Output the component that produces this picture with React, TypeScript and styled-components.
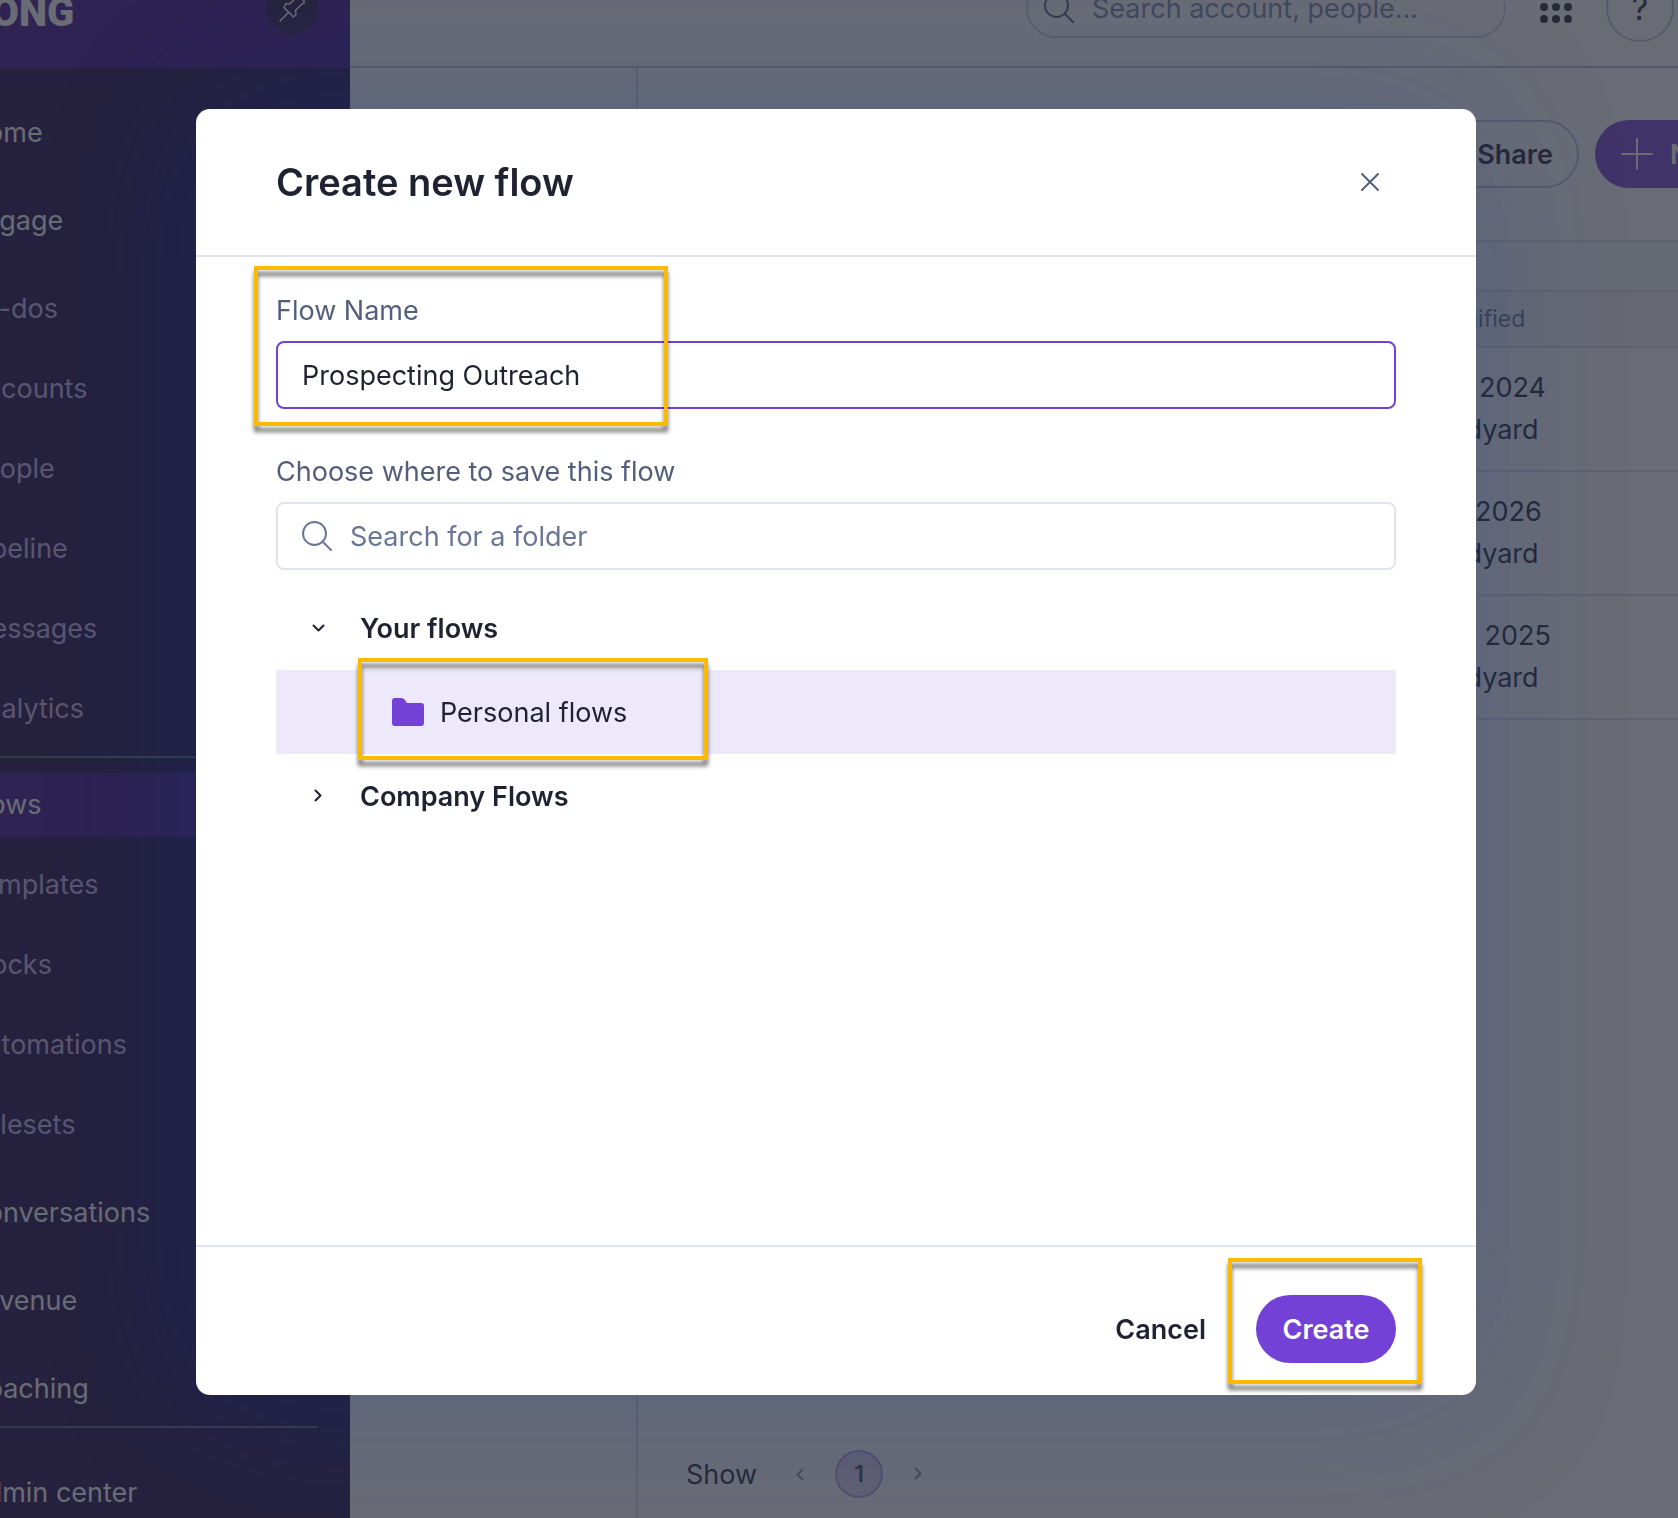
import React, { useState } from "react";
import styled, { createGlobalStyle, css } from "styled-components";

const color = {
  ink: "#1f2230",
  slate: "#545e7a",
  placeholder: "#6b7694",
  line: "#e1e4ec",
  violet: "#7341d6",
  violetSoft: "#eee9fa",
  navy: "#1c0549",
  navyBand: "#390c8a",
  navMuted: "#cdb4ea",
  marker: "#fbb900",
};

const GlobalStyle = createGlobalStyle`
  *, *::before, *::after { box-sizing: border-box; }
  html, body { margin: 0; height: 100%; overflow: hidden; }
  body, button, input {
    font-family: Inter, "Liberation Sans", sans-serif;
    font-size: 27px;
    color: ${color.ink};
  }
  button { border: 0; padding: 0; background: none; cursor: pointer; }
  a { text-decoration: none; color: inherit; }
  svg { display: block; flex: none; }
`;

const Viewport = styled.div`
  height: 100vh;
  overflow: hidden;
`;

/* The app page is scrolled a little past the top left corner of the window. */
const Page = styled.div`
  display: grid;
  grid-template-columns: 426px 1fr;
  height: calc(100vh + 50px);
  margin: -50px -180px 0 -76px;
  background: #fff;
`;

const Sidebar = styled.aside`
  background: ${color.navy};
  overflow: hidden;
`;

const Brand = styled.div`
  display: flex;
  align-items: center;
  justify-content: space-between;
  height: 118px;
  padding: 0 32px 0 40px;
  background: ${color.navyBand};
`;

const Logo = styled.a`
  padding-top: 8px;
  font-family: Roboto, sans-serif;
  font-size: 40px;
  font-weight: 900;
  line-height: 44px;
  color: #fff;
`;

const PinButton = styled.button`
  display: grid;
  place-items: center;
  width: 52px;
  height: 52px;
  border-radius: 50%;
  background: #24104e;
  color: #fff;
`;

const Nav = styled.nav`
  display: flex;
  flex-direction: column;
  padding-top: 9px;
`;

const NavItem = styled.a<{ $kind?: "sub" | "active"; $lead?: boolean }>`
  flex: none;
  height: 64px;
  margin-top: ${(p) => (p.$kind === "active" ? 0 : p.$kind === "sub" && !p.$lead ? 16 : 24)}px;
  padding-left: 43px;
  line-height: 64px;
  color: ${(p) => (p.$kind === "sub" ? color.navMuted : "#fff")};
  ${(p) => p.$kind === "active" && css`background: ${color.navyBand};`}
`;

const NavRule = styled.hr<{ $last?: boolean }>`
  flex: none;
  height: 2px;
  margin: ${(p) => (p.$last ? "5px 32px 9px 40px" : "15px 32px 15px 40px")};
  border: 0;
  background: #4c6270;
`;

const Content = styled.div`
  display: flex;
  flex-direction: column;
  min-width: 0;
`;

const TopBar = styled.header`
  display: flex;
  align-items: center;
  justify-content: flex-end;
  height: 118px;
  padding-right: 184px;
  border-bottom: 2px solid #bcc2dc;
`;

const GlobalSearch = styled.label`
  display: flex;
  align-items: center;
  gap: 18px;
  width: 480px;
  height: 60px;
  padding: 0 16px;
  border: 2px solid #cfd3e4;
  border-radius: 30px;
  color: ${color.slate};

  input {
    flex: 1;
    min-width: 0;
    padding: 0;
    border: 0;
    outline: 0;
    background: none;
  }
  input::placeholder { color: #7c86a8; opacity: 1; }
`;

const AppsButton = styled.button`
  margin: 0 32px;
`;

const HelpButton = styled.button`
  width: 68px;
  height: 68px;
  border: 2px solid #bcc2dc;
  border-radius: 50%;
  font-size: 32px;
`;

const Workspace = styled.div`
  flex: 1;
  display: grid;
  grid-template-columns: 288px 1fr;
`;

const FolderPane = styled.div`
  border-right: 2px solid #d5d9e6;
`;

const FlowsPane = styled.main`
  display: flex;
  flex-direction: column;
`;

const Toolbar = styled.div`
  display: flex;
  justify-content: flex-end;
  gap: 16px;
  padding: 52px 48px 52px 0;
`;

const pill = css`
  display: flex;
  align-items: center;
  justify-content: center;
  height: 68px;
  border-radius: 34px;
  font-weight: 600;
`;

const ShareButton = styled.button`
  ${pill}
  width: 160px;
  padding-left: 32px;
  border: 2px solid #bcc2dc;
`;

const NewButton = styled.button`
  ${pill}
  justify-content: flex-start;
  gap: 16px;
  width: 215px;
  padding-left: 25px;
  background: ${color.violet};
  color: #fff;
`;

const FlowTable = styled.table`
  width: 100%;
  border-spacing: 0;
  table-layout: fixed;
  text-align: left;

  th, td { border-bottom: 2px solid #dcdfea; padding: 0; font-weight: 400; }
  th { height: 56px; background: #f3f4f8; font-size: 23px; color: #64739c; }
  td { height: 124px; line-height: 42px; }
  th:last-child, td:last-child { width: 480px; }
`;

const FilterBand = styled.div`
  height: 52px;
  border-top: 2px solid #dcdfea;
  border-bottom: 2px solid #dcdfea;
  background: #f6f7fa;
`;

const Pager = styled.div`
  display: flex;
  align-items: center;
  gap: 24px;
  margin-top: auto;
  padding: 0 0 20px 48px;

  span { padding-right: 8px; }
`;

const PagerArrow = styled.button`
  color: #8a91ab;
`;

const PageNumber = styled.button`
  width: 48px;
  height: 48px;
  border: 2px solid #b5a0e6;
  border-radius: 50%;
  background: #dccff5;
  font-size: 23px;
  font-weight: 600;
  color: #3f4866;
`;

const Scrim = styled.div`
  position: fixed;
  inset: 0;
  display: flex;
  align-items: center;
  justify-content: center;
  padding: 0 6px 14px 0;
  background: rgba(42, 46, 59, 0.7);
`;

const Dialog = styled.form`
  display: flex;
  flex-direction: column;
  width: min(1280px, 100%);
  height: calc(100vh - 232px);
  border-radius: 14px;
  background: #fff;
  box-shadow: 0 0 160px rgba(0, 50, 170, 0.2);
`;

const DialogHeader = styled.header`
  display: flex;
  align-items: center;
  justify-content: space-between;
  height: 148px;
  padding: 0 80px;
  border-bottom: 2px solid ${color.line};

  h1 { margin: 0; font-size: 38px; font-weight: 600; line-height: 48px; }
`;

const CloseButton = styled.button`
  display: grid;
  place-items: center;
  width: 52px;
  height: 52px;
  color: ${color.slate};
`;

const DialogBody = styled.div`
  flex: 1;
  padding: 34px 80px 0;
`;

const Field = styled.div`
  position: relative;
  display: flex;
  flex-direction: column;
  gap: 10px;
  margin-bottom: 43px;

  & + & { margin-bottom: 16px; }
  label { line-height: 40px; color: ${color.slate}; }
`;

const InputBox = styled.div<{ $focused?: boolean }>`
  display: flex;
  align-items: center;
  gap: 18px;
  height: 68px;
  padding: 0 24px;
  border: 2px solid ${(p) => (p.$focused ? color.violet : color.line)};
  border-radius: 8px;
  color: ${color.placeholder};

  input {
    flex: 1;
    min-width: 0;
    padding: 0;
    border: 0;
    outline: 0;
    background: none;
  }
  input::placeholder { color: ${color.placeholder}; opacity: 1; }
`;

const Tree = styled.div`
  display: flex;
  flex-direction: column;
`;

const TreeGroup = styled.button`
  display: flex;
  align-items: center;
  gap: 31px;
  height: 84px;
  padding-left: 31px;
  font-weight: 600;
`;

const TreeFolder = styled.button`
  position: relative;
  display: flex;
  align-items: center;
  gap: 16px;
  height: 84px;
  padding-left: 116px;
  background: ${color.violetSoft};
`;

const DialogFooter = styled.footer`
  display: flex;
  justify-content: flex-end;
  gap: 24px;
  padding: 48px 80px 32px;
  border-top: 2px solid ${color.line};
`;

const CancelButton = styled.button`
  ${pill}
  padding: 0 26px;
`;

const CreateButton = styled.button`
  ${pill}
  position: relative;
  width: 140px;
  background: ${color.violet};
  color: #fff;
`;

const Marker = styled.span<{ $inset: string }>`
  position: absolute;
  inset: ${(p) => p.$inset};
  border: 4px solid ${color.marker};
  filter: drop-shadow(0 6px 2px rgba(0, 0, 0, 0.55));
  pointer-events: none;
`;

const SearchIcon = () => (
  <svg width="30" height="30" viewBox="0 0 30 30" fill="none" stroke="currentColor" strokeWidth="2" strokeLinecap="round">
    <circle cx="12.500" cy="12.500" r="11.500" />
    <path d="M20.500 20.500l8.500 8.500" />
  </svg>
);

const Chevron = ({ turn = 0 }: { turn?: number }) => (
  <svg width="22" height="22" viewBox="0 0 22 22" fill="none" stroke="currentColor" strokeWidth="2" strokeLinecap="round" strokeLinejoin="round">
    <path d="M8.500 5.500l5 5-5 5" transform={`rotate(${turn} 11 11)`} />
  </svg>
);

const PinIcon = () => (
  <svg width="28" height="28" viewBox="0 0 28 28" fill="none" stroke="currentColor" strokeWidth="1.500" strokeLinecap="round" strokeLinejoin="round">
    <path d="M2 26l8.500-8.500M6 12.500l9.500 9.500 2.500-2.500-.5-4 7-7h1l1-2-6-6-2 1v1l-7 6.500-3.500-.5z" />
  </svg>
);

const AppsIcon = () => (
  <svg width="36" height="36" viewBox="0 0 36 36" fill={color.ink}>
    {[5, 17, 29].map((y) => [6, 18, 30].map((x) => <circle key={`${x}-${y}`} cx={x} cy={y} r="4" />))}
  </svg>
);

const PlusIcon = () => (
  <svg width="34" height="34" viewBox="0 0 34 34" stroke="currentColor" strokeWidth="2" strokeLinecap="round">
    <path d="M17 2v30M2 17h30" />
  </svg>
);

const CloseIcon = () => (
  <svg width="20" height="20" viewBox="0 0 20 20" stroke="currentColor" strokeWidth="2" strokeLinecap="round">
    <path d="M2 2l16 16M18 2L2 18" />
  </svg>
);

const FolderIcon = () => (
  <svg width="32" height="28" viewBox="0 0 32 28" fill={color.violet}>
    <path d="M0 3a3 3 0 0 1 3-3h6.500a4 4 0 0 1 3 1.500L15 5h14a3 3 0 0 1 3 3v17a3 3 0 0 1-3 3H3a3 3 0 0 1-3-3z" />
  </svg>
);

const engageItems = ["To-dos", "Accounts", "People", "Pipeline", "Messages", "Analytics"];
const flowItems = ["Templates", "Blocks", "Automations", "Rulesets"];
const areaItems = ["Conversations", "Revenue", "Coaching"];
const rows = [
  { date: "Dec 10, 2024", owner: "J. Woodyard" },
  { date: "Jan 12, 2026", owner: "J. Woodyard" },
  { date: "Dec 20, 2025", owner: "J. Woodyard" },
];

function AppPage() {
  return (
    <Page>
      <Sidebar>
        <Brand>
          <Logo href="#home">GONG</Logo>
          <PinButton aria-label="Pin menu"><PinIcon /></PinButton>
        </Brand>
        <Nav>
          <NavItem href="#home">Home</NavItem>
          <NavItem href="#engage">Engage</NavItem>
          {engageItems.map((item, i) => (
            <NavItem key={item} href={`#${item}`} $kind="sub" $lead={i === 0}>{item}</NavItem>
          ))}
          <NavRule />
          <NavItem href="#flows" $kind="active">Flows</NavItem>
          {flowItems.map((item) => (
            <NavItem key={item} href={`#${item}`} $kind="sub">{item}</NavItem>
          ))}
          {areaItems.map((item) => (
            <NavItem key={item} href={`#${item}`}>{item}</NavItem>
          ))}
          <NavRule $last />
          <NavItem href="#admin">Admin center</NavItem>
        </Nav>
      </Sidebar>
      <Content>
        <TopBar>
          <GlobalSearch>
            <SearchIcon />
            <input type="search" aria-label="Search" placeholder="Search account, people..." />
          </GlobalSearch>
          <AppsButton aria-label="Apps"><AppsIcon /></AppsButton>
          <HelpButton aria-label="Help">?</HelpButton>
        </TopBar>
        <Workspace>
          <FolderPane />
          <FlowsPane>
            <Toolbar>
              <ShareButton>Share</ShareButton>
              <NewButton><PlusIcon />New flow</NewButton>
            </Toolbar>
            <FilterBand />
            <FlowTable>
              <thead>
                <tr><th /><th>Last modified</th></tr>
              </thead>
              <tbody>
                {rows.map((row) => (
                  <tr key={row.date}>
                    <td />
                    <td>{row.date}<br />{row.owner}</td>
                  </tr>
                ))}
              </tbody>
            </FlowTable>
            <Pager>
              <span>Show</span>
              <PagerArrow aria-label="Previous page"><Chevron turn={180} /></PagerArrow>
              <PageNumber>1</PageNumber>
              <PagerArrow aria-label="Next page"><Chevron /></PagerArrow>
            </Pager>
          </FlowsPane>
        </Workspace>
      </Content>
    </Page>
  );
}

function CreateFlowDialog() {
  const [name, setName] = useState("Prospecting Outreach");
  const [folder, setFolder] = useState("");
  return (
    <Scrim>
      <Dialog role="dialog" aria-labelledby="dialog-title" onSubmit={(e) => e.preventDefault()}>
        <DialogHeader>
          <h1 id="dialog-title">Create new flow</h1>
          <CloseButton type="button" aria-label="Close"><CloseIcon /></CloseButton>
        </DialogHeader>
        <DialogBody>
          <Field>
            <label htmlFor="flow-name">Flow Name</label>
            <InputBox $focused>
              <input id="flow-name" value={name} onChange={(e) => setName(e.target.value)} />
            </InputBox>
            <Marker $inset="-25px 728px -17px -22px" />
          </Field>
          <Field>
            <label htmlFor="folder">Choose where to save this flow</label>
            <InputBox>
              <SearchIcon />
              <input id="folder" placeholder="Search for a folder" value={folder} onChange={(e) => setFolder(e.target.value)} />
            </InputBox>
          </Field>
          <Tree>
            <TreeGroup type="button" aria-expanded="true"><Chevron turn={90} />Your flows</TreeGroup>
            <TreeFolder type="button">
              <FolderIcon />Personal flows
              <Marker $inset="-12px 688px -6px 82px" />
            </TreeFolder>
            <TreeGroup type="button" aria-expanded="false"><Chevron />Company Flows</TreeGroup>
          </Tree>
        </DialogBody>
        <DialogFooter>
          <CancelButton type="button">Cancel</CancelButton>
          <CreateButton type="submit">
            Create
            <Marker $inset="-37px -26px -21px -28px" />
          </CreateButton>
        </DialogFooter>
      </Dialog>
    </Scrim>
  );
}

export default function App() {
  return (
    <Viewport>
      <GlobalStyle />
      <AppPage />
      <CreateFlowDialog />
    </Viewport>
  );
}
